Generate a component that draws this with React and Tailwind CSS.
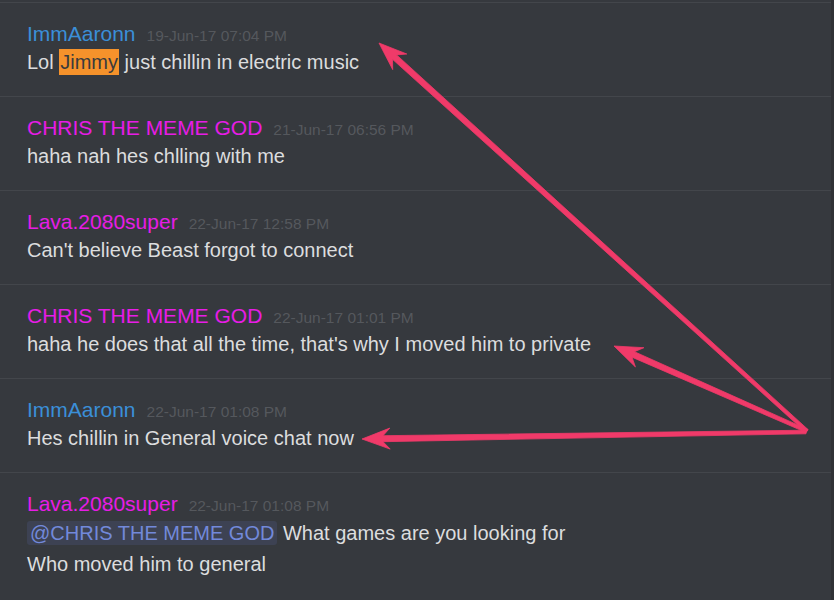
const BLUE = "text-[#3b8fd8]";
const PINK = "text-[#e71ce6]";

const messages = [
  { name: "ImmAaronn", color: BLUE, time: "19-Jun-17 07:04 PM", kind: "jimmy" },
  { name: "CHRIS THE MEME GOD", color: PINK, time: "21-Jun-17 06:56 PM", lines: ["haha nah hes chlling with me"] },
  { name: "Lava.2080super", color: PINK, time: "22-Jun-17 12:58 PM", lines: ["Can't believe Beast forgot to connect"] },
  { name: "CHRIS THE MEME GOD", color: PINK, time: "22-Jun-17 01:01 PM", lines: ["haha he does that all the time, that's why I moved him to private"] },
  { name: "ImmAaronn", color: BLUE, time: "22-Jun-17 01:08 PM", lines: ["Hes chillin in General voice chat now"] },
  { name: "Lava.2080super", color: PINK, time: "22-Jun-17 01:08 PM", kind: "mention" },
];

// skitch-style arrow: tapered shaft + notched head
function arrowPoints([x0, y0], [x1, y1]) {
  const len = Math.hypot(x1 - x0, y1 - y0);
  const ux = (x1 - x0) / len;
  const uy = (y1 - y0) / len;
  const nx = -uy;
  const ny = ux;
  const L = 28, W = 10.5, N = 7, wh = 3, wt = 1.8;
  const p = (a, b) => `${a.toFixed(1)},${b.toFixed(1)}`;
  return [
    p(x1, y1),
    p(x1 - ux * L + nx * W, y1 - uy * L + ny * W),
    p(x1 - ux * (L - N) + nx * wh, y1 - uy * (L - N) + ny * wh),
    p(x0 + nx * wt, y0 + ny * wt),
    p(x0 - nx * wt, y0 - ny * wt),
    p(x1 - ux * (L - N) - nx * wh, y1 - uy * (L - N) - ny * wh),
    p(x1 - ux * L - nx * W, y1 - uy * L - ny * W),
  ].join(" ");
}

function Body({ m }) {
  if (m.kind === "jimmy") {
    return (
      <div className="mt-[1px] text-[20px] leading-[30px] text-[#dcddde]">
        Lol <span className="bg-[#f5922b] text-[#3a3b3d] px-[1px] py-[2px]">Jimmy</span> just chillin in electric music
      </div>
    );
  }
  if (m.kind === "mention") {
    return (
      <div className="mt-[2px] text-[20px] leading-[31px] text-[#dcddde]">
        <div>
          <span className="bg-[#3d4253] text-[#7289da] px-[3px] py-[1px] rounded-[3px]">@CHRIS THE MEME GOD</span> What games are you looking for
        </div>
        <div>Who moved him to general</div>
      </div>
    );
  }
  return (
    <div className="mt-[1px] text-[20px] leading-[30px] text-[#dcddde]">
      {m.lines.map((l) => (
        <div key={l}>{l}</div>
      ))}
    </div>
  );
}

export default function App() {
  const tail = [807, 431];
  return (
    <div className="relative w-[834px] h-[600px] overflow-hidden bg-[#36393e] font-['Liberation_Sans',Arial,sans-serif]">
      <div className="pt-[2px] border-r-[3px] border-[#303236] h-full">
        {messages.map((m, i) => (
          <div key={i} className="border-t border-[#43464b] pl-[27px] pt-[19px] pb-[19px]">
            <div className="flex items-baseline h-[24px] leading-[24px]">
              <span className={`text-[21px] ${m.color}`}>{m.name}</span>
              <span className="ml-[11px] text-[15.5px] text-[#55585d]">{m.time}</span>
            </div>
            <Body m={m} />
          </div>
        ))}
      </div>

      {/* annotation arrows */}
      <svg className="absolute inset-0 pointer-events-none" width="834" height="600" viewBox="0 0 834 600">
        <g fill="#f03a69" stroke="#f03a69" strokeWidth="0.8" strokeLinejoin="round">
          <polygon points={arrowPoints(tail, [379, 43])} />
          <polygon points={arrowPoints(tail, [614, 346])} />
          <polygon points={arrowPoints([806, 432], [362, 439])} />
        </g>
      </svg>
    </div>
  );
}
